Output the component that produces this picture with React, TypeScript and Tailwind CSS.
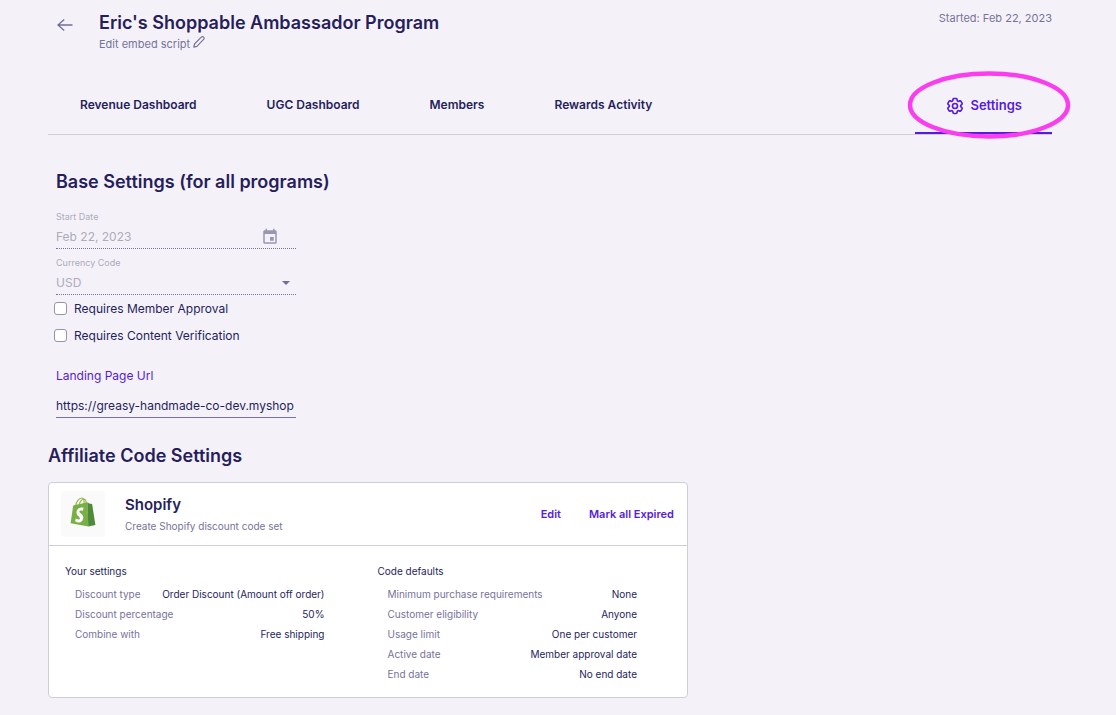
import React from 'react';
import { HiOutlineCog6Tooth } from 'react-icons/hi2';
import { MdEvent } from 'react-icons/md';

const tabs = ['Revenue Dashboard', 'UGC Dashboard', 'Members', 'Rewards Activity'];

const yourSettings: [string, string][] = [
  ['Discount type', 'Order Discount (Amount off order)'],
  ['Discount percentage', '50%'],
  ['Combine with', 'Free shipping'],
];

const codeDefaults: [string, string][] = [
  ['Minimum purchase requirements', 'None'],
  ['Customer eligibility', 'Anyone'],
  ['Usage limit', 'One per customer'],
  ['Active date', 'Member approval date'],
  ['End date', 'No end date'],
];

function ArrowLeft() {
  return (
    <svg width="16" height="14" viewBox="0 0 16 14" fill="none" stroke="currentColor" strokeWidth="1.3" aria-hidden="true">
      <path d="M15.5 7H1M7.2 1.500 1 7l6.200 5.500" />
    </svg>
  );
}

function Pencil() {
  return (
    <svg width="12" height="12" viewBox="0 0 12 12" fill="none" stroke="currentColor" strokeWidth="1.200" strokeLinejoin="round" aria-hidden="true">
      <path d="M.8 11.200 1.500 8 8.300 1.200c.7-.8 1.600-.8 2.300-.1.800.7.7 1.600 0 2.300L3.900 10.300z" />
    </svg>
  );
}

function ShopifyLogo() {
  return (
    <svg width="26" height="30" viewBox="0 0 26 30" role="img" aria-label="Shopify">
      <path d="M5.800 8.500C6.300 4.800 8.800 1 11.700 1c1.700 0 2.500 1.700 2.500 5M9.300 7.500C9.800 4.300 12 2 13.700 2c1.600 0 2.400 2 2.600 4" fill="none" stroke="#8fb63f" strokeWidth="1.100" />
      <path d="M3.200 8.500 17.300 5.300 18.500 29.600.6 26.300z" fill="#78b044" />
      <path d="M17.300 5.300 19.200 6.600 22.100 7 25.400 28 18.300 29.600z" fill="#4f8a3a" />
      <path d="M13.600 10.800 12.700 14c-1-.5-3.200-.8-3.300.6-.1 1.600 4 2.200 3.900 6.100-.1 3.300-2.500 5-5.200 4.700-1.400-.2-2.400-.8-3-1.500l.8-2.600c1.100 1 3.800 1.900 4 .1.100-1.800-3.500-2.300-3.400-6 .1-3.500 3.300-5.900 7.100-4.600z" fill="#fff" />
    </svg>
  );
}

function DetailList({ title, rows }: { title: string; rows: [string, string][] }) {
  return (
    <section className="min-w-0 flex-1">
      <h4 className="text-[10px] leading-4">{title}</h4>
      <dl className="mt-[5px] pl-[10px]">
        {rows.map(([name, value]) => (
          <div key={name} className="flex justify-between py-[2px] leading-4">
            <dt className="text-[#77739a]">{name}</dt>
            <dd>{value}</dd>
          </div>
        ))}
      </dl>
    </section>
  );
}

function CheckRow({ label }: { label: string }) {
  return (
    <label className="flex items-center gap-[7px] text-xs leading-[27px]">
      <input type="checkbox" className="size-[13px] appearance-none rounded-[3px] border border-[#9693a8] bg-white checked:bg-[#561bdc]" />
      {label}
    </label>
  );
}

export default function App() {
  return (
    <main className="min-h-screen bg-[#f4f2f8] pr-16 pb-4 pl-12 font-['Inter',sans-serif] text-[#261e5c]">
      <header className="flex items-start justify-between pt-[10px]">
        <div className="flex items-start">
          <button type="button" aria-label="Back" className="mt-2 ml-[9px] text-[#716c9b]">
            <ArrowLeft />
          </button>
          <div className="ml-[26px]">
            <h1 className="text-lg leading-[25px] font-semibold">Eric's Shoppable Ambassador Program</h1>
            <a href="#embed" className="flex items-start gap-[3px] text-[11px] leading-[18px] text-[#77739a]">
              Edit embed script
              <span className="pt-px">
                <Pencil />
              </span>
            </a>
          </div>
        </div>
        <p className="text-[11px] leading-4 text-[#77739a]">Started: Feb 22, 2023</p>
      </header>

      <nav className="mt-[22px] flex h-[60px] items-stretch border-b border-[#cfcdd8] text-xs font-semibold">
        {tabs.map((tab) => (
          <a key={tab} href="#tab" className="mr-[6px] flex items-center px-8">
            {tab}
          </a>
        ))}
        <a href="#settings" className="relative ml-auto flex items-center gap-[5px] border-b-2 border-[#561bdc] px-[30px] pt-1 text-[13px] text-[#561bdc]">
          <HiOutlineCog6Tooth size={20} strokeWidth={2} />
          Settings
          <svg className="pointer-events-none absolute top-[-5px] left-[-8px]" width="164" height="70" viewBox="0 0 164 70" fill="none" aria-hidden="true">
            <ellipse cx="82" cy="35" rx="79" ry="31.500" stroke="#fb3df0" strokeWidth="4.500" />
          </svg>
        </a>
      </nav>

      <form className="mt-[34px] ml-2 w-60">
        <h2 className="text-lg leading-[26px] font-semibold whitespace-nowrap">Base Settings (for all programs)</h2>

        <div className="mt-4 border-b border-dotted border-[#77739a] text-[#aeabbd]">
          <label htmlFor="start" className="block text-[9px] leading-3">Start Date</label>
          <div className="flex h-[25px] items-center pt-[2px]">
            <input id="start" disabled defaultValue="Feb 22, 2023" className="w-0 flex-1 bg-transparent text-xs" />
            <MdEvent size={18} className="mr-[17px] text-[#9996b2]" />
          </div>
        </div>

        <div className="mt-2 border-b border-dotted border-[#77739a] text-[#aeabbd]">
          <label htmlFor="currency" className="block text-[9px] leading-3">Currency Code</label>
          <div className="flex h-[25px] items-center pt-[2px]">
            <select id="currency" disabled className="w-0 flex-1 appearance-none bg-transparent text-xs opacity-100">
              <option>USD</option>
            </select>
            <svg width="8" height="4" viewBox="0 0 8 4" className="mr-[6px] text-[#716c9b]" aria-hidden="true">
              <path d="M0 0h8L4 4z" fill="currentColor" />
            </svg>
          </div>
        </div>

        <div className="-ml-[2px]">
          <CheckRow label="Requires Member Approval" />
          <CheckRow label="Requires Content Verification" />
        </div>

        <label htmlFor="landing" className="mt-[17px] block text-xs leading-5 text-[#561bdc]">Landing Page Url</label>
        <input
          id="landing"
          type="url"
          defaultValue="https://greasy-handmade-co-dev.myshop"
          className="mt-2 h-6 w-full border-b border-[#77739a] bg-transparent text-xs outline-none"
        />
      </form>

      <h2 className="mt-[25px] text-lg leading-[26px] font-semibold">Affiliate Code Settings</h2>

      <article className="mt-[13px] max-w-[640px] rounded border border-[#cfcdd8] bg-white">
        <header className="flex h-[63px] items-center border-b border-[#cfcdd8] pr-[13px] pl-3">
          <div className="flex h-[46px] w-11 items-center justify-center rounded bg-[#fafafb] pb-1">
            <ShopifyLogo />
          </div>
          <div className="ml-5">
            <h3 className="text-[15px] leading-6 font-semibold">Shopify</h3>
            <p className="text-[10px] leading-[18px] text-[#77739a]">Create Shopify discount code set</p>
          </div>
          <div className="ml-auto flex gap-7 text-[11px] font-semibold text-[#561bdc]">
            <button type="button">Edit</button>
            <button type="button">Mark all Expired</button>
          </div>
        </header>
        <div className="flex gap-[53px] pt-[17px] pr-[50px] pb-[13px] pl-4 text-[10px]">
          <DetailList title="Your settings" rows={yourSettings} />
          <DetailList title="Code defaults" rows={codeDefaults} />
        </div>
      </article>
    </main>
  );
}
